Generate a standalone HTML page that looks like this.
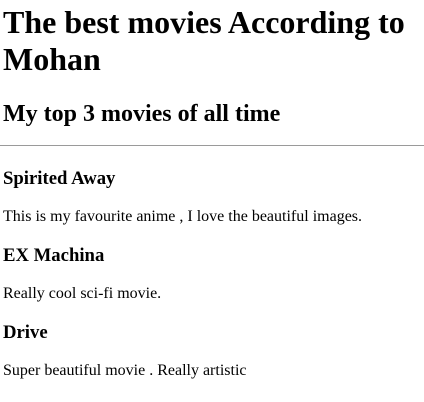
<!DOCTYPE html>
<html><head><meta charset="utf-8"><style>
html,body{margin:0;padding:0;background:#fff;}
body{padding:0 3px;font-family:"Liberation Serif",serif;color:#000;width:418px;}
h1{font-size:32px;line-height:37px;margin:4px 0 0;font-weight:bold;}
h2{font-size:24px;line-height:28px;margin:22px 0 17px;font-weight:bold;}
hr{margin:0 -3px;border:0;border-top:1px solid #9a9a9a;height:0;}
h3{font-size:18.72px;line-height:21px;margin:19.3px 0 18.7px;font-weight:bold;}
hr + h3{margin-top:22px;}
p{font-size:16px;line-height:18px;margin:0;}
</style></head><body>
<h1>The best movies According to Mohan</h1>
<h2>My top 3 movies of all time</h2>
<hr>
<h3>Spirited Away</h3>
<p>This is my favourite anime , I love the beautiful images.</p>
<h3>EX Machina</h3>
<p>Really cool sci-fi movie.</p>
<h3>Drive</h3>
<p>Super beautiful movie . Really artistic</p>
</body></html>
